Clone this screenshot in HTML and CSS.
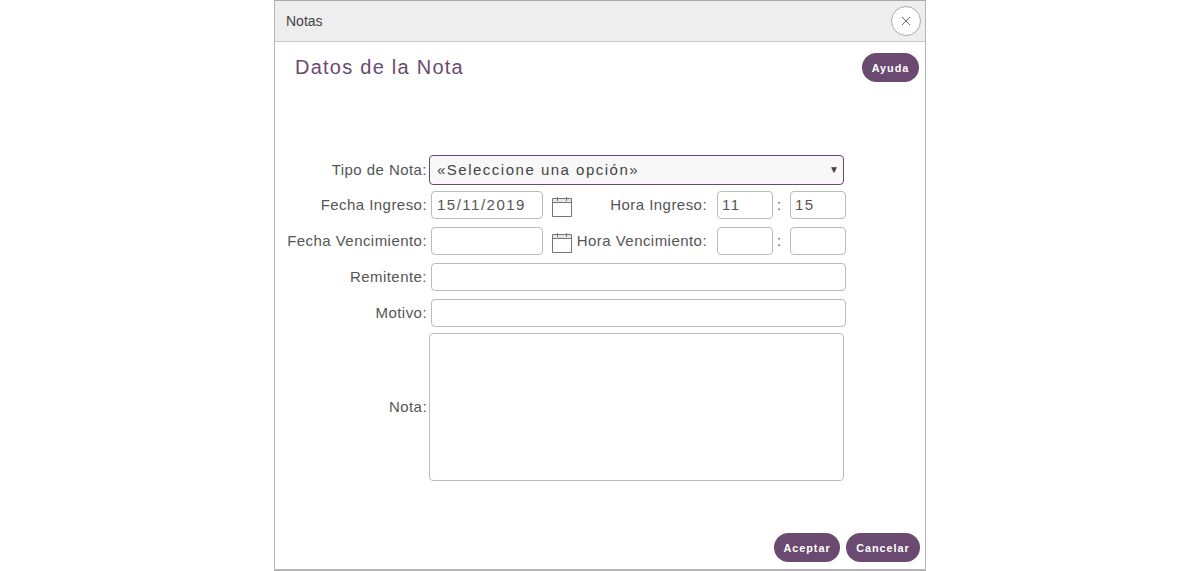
FILE: index.html
```html
<!DOCTYPE html>
<html lang="es">
<head>
    <meta charset="UTF-8">
    <meta name="viewport" content="width=device-width, initial-scale=1.0">
    <title>Notas</title>
    <link rel="stylesheet" href="styles.css">
</head>
<body>
    <div class="dialog">
        <div class="dialog-header">
            <span class="dialog-title">Notas</span>
            <button type="button" class="close-button" aria-label="Cerrar">
                <svg width="10" height="10" viewBox="0 0 10 10"><path d="M1 1L9 9M9 1L1 9" stroke="#666" stroke-width="1" fill="none"/></svg>
            </button>
        </div>
        <div class="dialog-body">
            <div class="title-row">
                <h1>Datos de la Nota</h1>
                <button type="button" class="pill pill-help">Ayuda</button>
            </div>
            <form class="note-form">
                <div class="row row-select">
                    <label class="field-label">Tipo de Nota:</label>
                    <div class="fake-select">
                        <span>«Seleccione una opción»</span>
                        <span class="arrow">▼</span>
                    </div>
                </div>
                <div class="row">
                    <label class="field-label">Fecha Ingreso:</label>
                    <input type="text" class="input date-input" value="15/11/2019">
                    <svg class="cal" width="22" height="22" viewBox="0 0 22 22"><path d="M1.5 3.5H20.5V7.5H1.5Z" fill="#e6e6e6"/><path d="M1.5 3.5H20.5V21.5H1.5ZM1.5 7.5H20.5M6.5 2V6M15.5 2V6" stroke="#777" stroke-width="1" fill="none"/></svg>
                    <label class="time-label">Hora Ingreso:</label>
                    <input type="text" class="input time-input" value="11">
                    <span class="colon">:</span>
                    <input type="text" class="input time-input" value="15">
                </div>
                <div class="row">
                    <label class="field-label">Fecha Vencimiento:</label>
                    <input type="text" class="input date-input">
                    <svg class="cal" width="22" height="22" viewBox="0 0 22 22"><path d="M1.5 3.5H20.5V7.5H1.5Z" fill="#e6e6e6"/><path d="M1.5 3.5H20.5V21.5H1.5ZM1.5 7.5H20.5M6.5 2V6M15.5 2V6" stroke="#777" stroke-width="1" fill="none"/></svg>
                    <label class="time-label">Hora Vencimiento:</label>
                    <input type="text" class="input time-input">
                    <span class="colon">:</span>
                    <input type="text" class="input time-input">
                </div>
                <div class="row">
                    <label class="field-label">Remitente:</label>
                    <input type="text" class="input wide-input">
                </div>
                <div class="row row-last">
                    <label class="field-label">Motivo:</label>
                    <input type="text" class="input wide-input">
                </div>
                <div class="row row-note">
                    <label class="field-label">Nota:</label>
                    <textarea class="note-area"></textarea>
                </div>
            </form>
            <div class="dialog-footer">
                <button type="button" class="pill pill-ok">Aceptar</button>
                <button type="button" class="pill pill-cancel">Cancelar</button>
            </div>
        </div>
    </div>
</body>
</html>
```

FILE: styles.css
```css
* {
    box-sizing: border-box;
}
html, body {
    height: 100%;
}
body {
    margin: 0;
    background: #fff;
    font-family: 'Liberation Sans', Arial, sans-serif;
    color: #555;
    overflow: hidden;
}
.dialog {
    width: 652px;
    height: 571px;
    margin: 0 auto;
    background: #fff;
    border: 1px solid #b5b5b5;
    border-top-color: #aaa;
    border-bottom: 2px solid #b5b5b5;
    display: flex;
    flex-direction: column;
}
.dialog-header {
    height: 41px;
    flex: none;
    display: flex;
    align-items: center;
    justify-content: space-between;
    padding: 0 4px 0 11px;
    background: #eee;
    border-bottom: 1px solid #c8c8c8;
}
.dialog-title {
    font-size: 14px;
    color: #444;
}
.close-button {
    width: 30px;
    height: 30px;
    padding: 0;
    border: 1px solid #aaa;
    border-radius: 50%;
    background: #fff;
    display: flex;
    align-items: center;
    justify-content: center;
}
.dialog-body {
    flex: 1;
    display: flex;
    flex-direction: column;
}
.title-row {
    height: 113px;
    flex: none;
    display: flex;
    align-items: flex-start;
    justify-content: space-between;
    padding: 11px 6px 0 20px;
}
h1 {
    margin: 0;
    font-size: 20px;
    font-weight: normal;
    letter-spacing: 1.25px;
    line-height: 28px;
    color: #6a4a70;
}
.pill {
    height: 29px;
    padding: 0;
    border: none;
    border-radius: 15px;
    background: #6a4a70;
    color: #fff;
    font-family: 'Liberation Sans', Arial, sans-serif;
    font-size: 10.8px;
    font-weight: bold;
    letter-spacing: 1px;
}
.pill-help {
    width: 57px;
}
.pill-ok {
    width: 66px;
}
.pill-cancel {
    width: 74px;
}
.note-form {
    flex: none;
}
.row {
    display: flex;
    align-items: center;
    height: 28px;
    margin-bottom: 8px;
    font-size: 15px;
    letter-spacing: 0.45px;
}
.row-select {
    height: 30px;
    margin-bottom: 6px;
}
.row-last {
    margin-bottom: 6px;
}
.row-note {
    height: 148px;
    margin-bottom: 0;
}
.field-label {
    width: 152px;
    padding-bottom: 2px;
    flex: none;
    text-align: right;
    white-space: nowrap;
}
.fake-select {
    width: 415px;
    height: 30px;
    margin-left: 2px;
    padding: 0 4px 2px 7px;
    display: flex;
    align-items: center;
    justify-content: space-between;
    border: 1px solid #6a4a70;
    border-radius: 4px;
    background: #f8f8f8;
    letter-spacing: 1.5px;
    color: #444;
}
.arrow {
    font-size: 10px;
    letter-spacing: 0;
    color: #444;
}
.input {
    height: 28px;
    margin: 0;
    padding: 0 5px 2px;
    border: 1px solid #bbb;
    border-radius: 4px;
    background: #fff;
    font-family: 'Liberation Sans', Arial, sans-serif;
    font-size: 15px;
    letter-spacing: 1.5px;
    color: #555;
}
.date-input {
    width: 112px;
    margin-left: 4px;
}
.cal {
    flex: none;
    margin-left: 8px;
    margin-top: 2px;
}
.time-label {
    width: 134px;
    margin-right: 10px;
    padding-bottom: 2px;
    flex: none;
    text-align: right;
    white-space: nowrap;
}
.time-input {
    width: 56px;
    padding: 0 4px 2px;
}
.colon {
    width: 17px;
    flex: none;
    padding: 0 0 2px 4px;
}
.wide-input {
    width: 415px;
    margin-left: 4px;
}
.note-area {
    width: 415px;
    height: 148px;
    margin: 0 0 0 2px;
    border: 1px solid #bbb;
    border-radius: 4px;
    background: #fff;
    resize: none;
}
.dialog-footer {
    flex: 1;
    display: flex;
    align-items: flex-end;
    justify-content: flex-end;
    gap: 6px;
    padding-right: 5px;
    padding-bottom: 7px;
}
```
